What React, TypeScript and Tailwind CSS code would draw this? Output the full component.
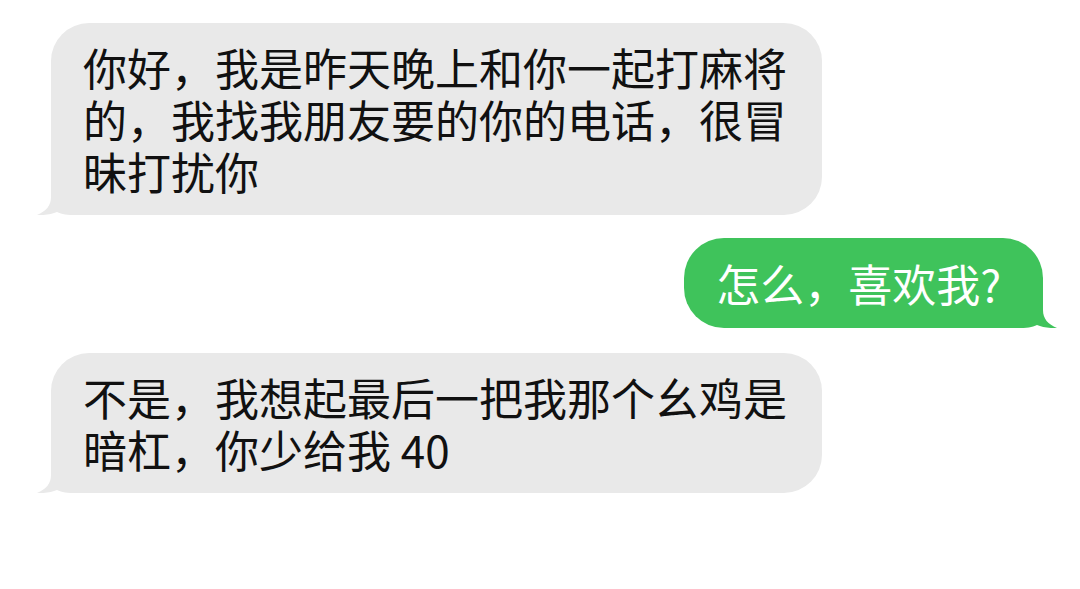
import React from 'react';

const font = { fontFamily: '"Noto Sans CJK SC", "Noto Sans", sans-serif' };

const Tail: React.FC<{ color: string; side: 'left' | 'right' }> = ({ color, side }) => (
  <svg
    width="54"
    height="44"
    viewBox="0 0 54 44"
    className={
      side === 'left'
        ? 'absolute left-[-14px] bottom-0'
        : 'absolute right-[-14px] bottom-0 -scale-x-100'
    }
  >
    <path
      d="M14 0 L14 26 C14 35 9 40 0 44 C8 44.5 15 43 20 41 C25 43.5 30 44 40 44 L54 44 L54 0 Z"
      fill={color}
    />
  </svg>
);

const Received: React.FC<{ lines: string[]; className?: string }> = ({ lines, className }) => (
  <div className={`relative self-start w-[771px] rounded-[38px] bg-[#e9e9e9] pl-[32px] pr-[35px] py-[18px] ${className ?? ''}`}>
    <Tail color="#e9e9e9" side="left" />
    <div className="relative text-[44px] leading-[52px] text-[#111111] whitespace-nowrap" style={font}>
      {lines.map((l) => (
        <div key={l}>{l}</div>
      ))}
    </div>
  </div>
);

export default function App() {
  return (
    <div className="w-[1080px] h-[589px] bg-white flex flex-col pl-[51px] pr-[37px] pt-[23px] overflow-hidden">
      <Received
        lines={['你好，我是昨天晚上和你一起打麻将', '的，我找我朋友要的你的电话，很冒', '昧打扰你']}
      />

      <div className="relative self-end mt-[23px] h-[90px] rounded-[40px] bg-[#3fc35b] pl-[32px] pr-[42px] py-[19px]">
        <Tail color="#3fc35b" side="right" />
        <div className="relative text-[44px] leading-[52px] text-white whitespace-nowrap" style={font}>
          怎么，喜欢我?
        </div>
      </div>

      <Received
        className="mt-[25px]"
        lines={['不是，我想起最后一把我那个幺鸡是', '暗杠，你少给我 40']}
      />
    </div>
  );
}
